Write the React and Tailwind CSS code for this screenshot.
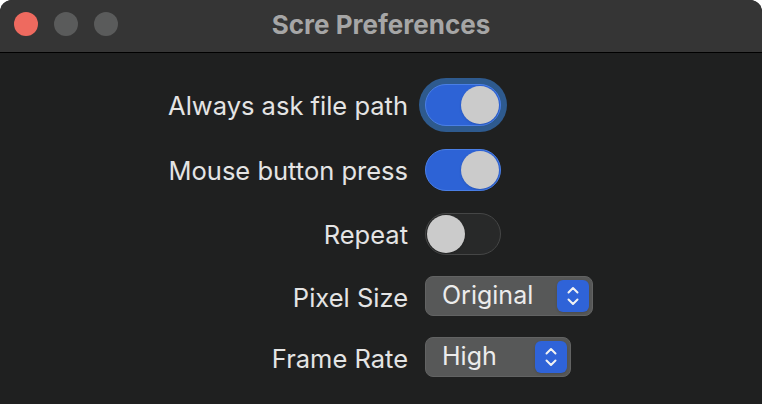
import React from "react";

const Toggle = ({ on, focused }) => (
  <div
    className={`rounded-full ${
      focused ? "p-[6px] -m-[6px] bg-[#2e5a8e]" : ""
    }`}
  >
    <div
      className={`relative w-[76px] h-[42px] rounded-full border ${
        on
          ? "bg-[#2d63d6] border-[#4a7fe6]"
          : "bg-[#282929] border-[#454646]"
      }`}
    >
      <div
        className={`absolute top-[1px] h-[38px] w-[38px] rounded-full bg-[#cbcbcb] shadow ${
          on ? "right-[1px]" : "left-[1px]"
        }`}
      />
    </div>
  </div>
);

const Stepper = () => (
  <div className="w-8 h-8 rounded-md bg-[#2f63d8] flex items-center justify-center shadow">
    <svg width="14" height="22" viewBox="0 0 14 22" fill="none">
      <path
        d="M2.5 7.5 L7 3 L11.5 7.5"
        stroke="#f2f2f2"
        strokeWidth="2"
        strokeLinecap="round"
        strokeLinejoin="round"
      />
      <path
        d="M2.5 14.5 L7 19 L11.5 14.5"
        stroke="#f2f2f2"
        strokeWidth="2"
        strokeLinecap="round"
        strokeLinejoin="round"
      />
    </svg>
  </div>
);

const Select = ({ value, width }) => (
  <div
    className={`${width} h-10 rounded-lg bg-[#575858] border border-[#626363] flex items-center justify-between pl-4 pr-[3px]`}
  >
    <span className="text-[#ececec] text-[25px]">{value}</span>
    <Stepper />
  </div>
);

const rows = [
  { label: "Always ask file path", h: "h-[65px]", control: <Toggle on focused /> },
  { label: "Mouse button press", h: "h-[64px]", control: <Toggle on /> },
  { label: "Repeat", h: "h-[63px]", control: <Toggle /> },
  { label: "Pixel Size", h: "h-[61px]", control: <Select value="Original" width="w-[168px]" /> },
  { label: "Frame Rate", h: "h-[40px]", control: <Select value="High" width="w-[146px]" /> },
];

export default function App() {
  return (
    <div
      className="w-[762px] h-[404px] bg-[#1f2020] overflow-hidden rounded-t-[12px]"
      style={{ fontFamily: "Inter, 'Liberation Sans', sans-serif" }}
    >
      {/* title bar */}
      <div className="relative h-[53px] bg-[#353535] border-b border-black flex items-center justify-center">
        <div className="absolute left-[14px] top-[12px] flex gap-4">
          <div className="w-6 h-6 rounded-full bg-[#ee6a5f]" />
          <div className="w-6 h-6 rounded-full bg-[#5a5b5b]" />
          <div className="w-6 h-6 rounded-full bg-[#5a5b5b]" />
        </div>
        <h1 className="text-[#a6a6a6] text-[26px] font-bold -mt-[4px]">
          Scre Preferences
        </h1>
      </div>

      {/* settings */}
      <div className="flex flex-col pt-[31px]">
        {rows.map((row) => (
          <div key={row.label} className={`flex items-start ${row.h}`}>
            <div className="w-[408px] h-[42px] pt-[3px] flex items-center justify-end text-[#e4e4e4] text-[25.5px]">
              {row.label}
            </div>
            <div className="ml-[17px]">{row.control}</div>
          </div>
        ))}
      </div>
    </div>
  );
}
